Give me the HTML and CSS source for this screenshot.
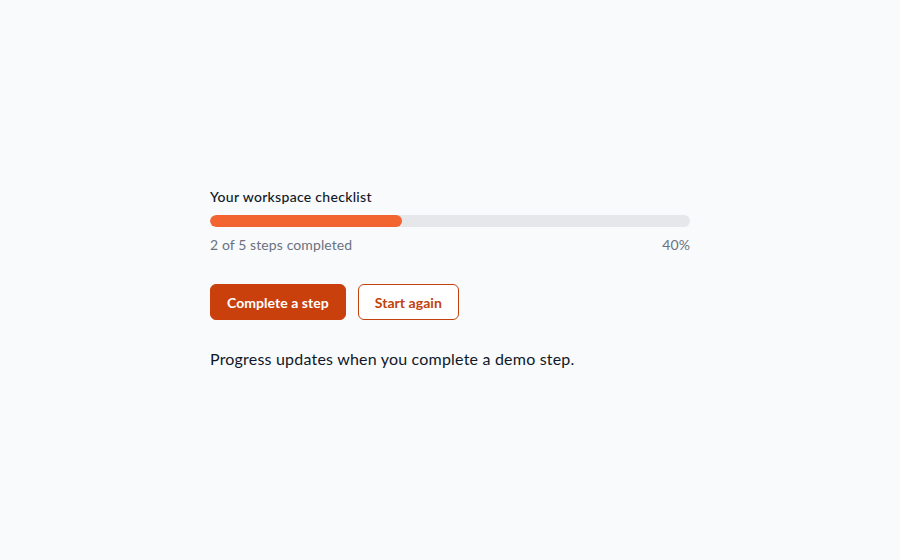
FILE: index.html
```html
<!DOCTYPE html>
<html lang="en">
<head>
<meta charset="utf-8">
<title>Workspace checklist</title>
<link rel="stylesheet" href="styles.css">
</head>
<body>
<main class="page">
  <section class="checklist">
    <h1 class="title">Your workspace checklist</h1>
    <div class="track" role="progressbar" aria-valuenow="40" aria-valuemin="0" aria-valuemax="100">
      <div class="fill" style="width: 40%"></div>
    </div>
    <div class="meta">
      <span>2 of 5 steps completed</span>
      <span>40%</span>
    </div>
    <div class="actions">
      <button class="btn btn-primary" type="button">Complete a step</button>
      <button class="btn btn-outline" type="button">Start again</button>
    </div>
    <p class="note">Progress updates when you complete a demo step.</p>
  </section>
</main>
</body>
</html>
```

FILE: styles.css
```css
* { box-sizing: border-box; }
html, body { margin: 0; padding: 0; }
body {
  background: #f8fafc;
  font-family: Lato, "Noto Sans", sans-serif;
  color: #111827;
}
.page {
  width: 900px;
  height: 560px;
  display: flex;
  justify-content: center;
  padding-top: 188px;
}
.checklist {
  width: 480px;
  display: flex;
  flex-direction: column;
}
.title {
  margin: 0;
  font-size: 14px;
  font-weight: 500;
  line-height: 18px;
  letter-spacing: 0.3px;
  color: #111827;
}
.track {
  margin-top: 9px;
  height: 12px;
  border-radius: 6px;
  background: #e5e7eb;
  overflow: hidden;
}
.fill {
  height: 100%;
  border-radius: 6px;
  background: #f26430;
}
.meta {
  margin-top: 9px;
  display: flex;
  justify-content: space-between;
  font-size: 14px;
  line-height: 18px;
  letter-spacing: 0.1px;
  color: #6b7280;
}
.actions {
  margin-top: 30px;
  display: flex;
  gap: 12px;
}
.btn {
  height: 36px;
  padding: 0 16px;
  border-radius: 6px;
  font-family: inherit;
  font-size: 14px;
  font-weight: 700;
  letter-spacing: 0.05px;
  cursor: pointer;
}
.btn-primary {
  background: #c9400c;
  border: 1px solid #c9400c;
  color: #ffffff;
}
.btn-outline {
  background: #ffffff;
  border: 1px solid #c2410c;
  color: #c2410c;
}
.note {
  margin: 28px 0 0;
  font-size: 16px;
  line-height: 22px;
  letter-spacing: 0.2px;
  color: #111827;
}
```
